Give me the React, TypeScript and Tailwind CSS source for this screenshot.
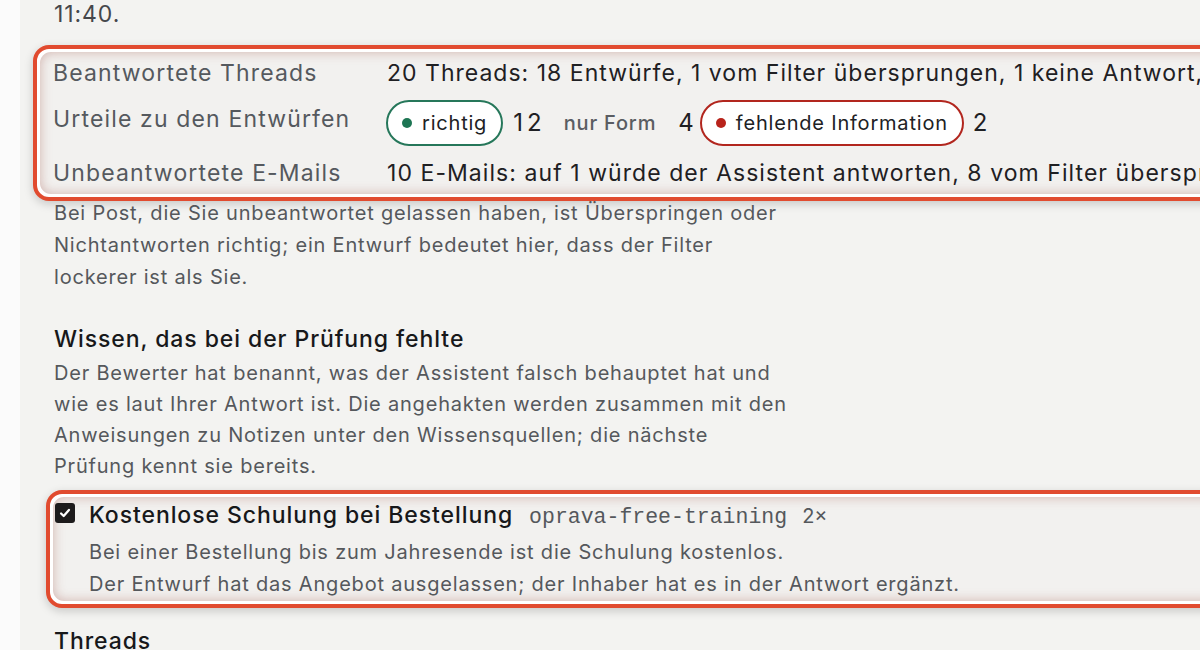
import React from 'react';

const sans = { fontFamily: 'Inter, "Noto Sans", sans-serif' };

function Pill({ label, tone }: { label: string; tone: 'green' | 'red' }) {
  const border = tone === 'green' ? 'border-[#26775a]' : 'border-[#b2261e]';
  const dot = tone === 'green' ? 'bg-[#1d7553]' : 'bg-[#b8231b]';
  return (
    <span className={`inline-flex h-[46px] items-center gap-[10px] rounded-full border-2 ${border} bg-white px-[14px] text-[20px] tracking-[0.04em] text-[#202124]`}>
      <span className={`h-[10px] w-[10px] rounded-full ${dot}`} />
      {label}
    </span>
  );
}

function Highlight({ children, className = '' }: { children: React.ReactNode; className?: string }) {
  return (
    <div className={`w-[1300px] rounded-[16px] border-4 border-[#e14b2f] bg-white p-[3px] shadow-[0_3px_10px_rgba(0,0,0,0.18)] ${className}`}>
      <div className="rounded-[11px] bg-[#f2f1ef] shadow-[inset_0_0_12px_rgba(150,60,50,0.35)]">{children}</div>
    </div>
  );
}

export default function App() {
  return (
    <div className="flex h-[650px] w-[1200px] overflow-hidden bg-[#fbfbfb]" style={sans}>
      <div className="w-[20px] shrink-0" />
      <main className="flex-1 overflow-hidden bg-[#f3f3f1] pl-[34px]">
        <p className="-mt-[2px] text-[23px] leading-[32px] tracking-[0.04em] text-[#45474b]">11:40.</p>

        <Highlight className="-ml-[21px] mt-[15px]">
          <div className="grid grid-cols-[334px_1fr] whitespace-nowrap pl-[13px] text-[23px] tracking-[0.05em]">
            <div className="flex h-[42px] items-center text-[#55595e]">Beantwortete Threads</div>
            <div className="flex h-[42px] items-center tracking-[0.044em] text-[#1f2023]">
              20 Threads: 18 Entwürfe, 1 vom Filter übersprungen, 1 keine Antwort, 0 Fehler
            </div>
            <div className="flex h-[58px] items-start pt-[8px] text-[#55595e]">Urteile zu den Entwürfen</div>
            <div className="-ml-[1px] flex h-[58px] items-center text-[#1f2023]">
              <Pill label="richtig" tone="green" />
              <span className="ml-[10px] text-[24px] tracking-[0.17em]">12</span>
              <span className="ml-[18px] text-[20px] font-medium tracking-[0.04em] text-[#5a5d62]">nur Form</span>
              <span className="ml-[22px] text-[24px]">4</span>
              <span className="ml-[5px]">
                <Pill label="fehlende Information" tone="red" />
              </span>
              <span className="ml-[9px] text-[24px]">2</span>
            </div>
            <div className="flex h-[42px] items-center text-[#55595e]">Unbeantwortete E-Mails</div>
            <div className="flex h-[42px] items-center tracking-[0.046em] text-[#1f2023]">
              10 E-Mails: auf 1 würde der Assistent antworten, 8 vom Filter übersprungen, 1 keine Antwort
            </div>
          </div>
        </Highlight>

        <p className="-mt-[4px] max-w-[738px] text-[20px] leading-[32px] tracking-[0.04em] text-[#55585c]">
          Bei Post, die Sie unbeantwortet gelassen haben, ist Überspringen oder Nichtantworten richtig; ein Entwurf bedeutet hier, dass der Filter lockerer ist als Sie.
        </p>

        <h2 className="mt-[30px] text-[23px] font-medium leading-[32px] tracking-[0.04em] text-[#17181a]">Wissen, das bei der Prüfung fehlte</h2>
        <p className="mt-[3px] max-w-[738px] text-[20px] leading-[31px] tracking-[0.04em] text-[#55585c]">
          Der Bewerter hat benannt, was der Assistent falsch behauptet hat und wie es laut Ihrer Antwort ist. Die angehakten werden zusammen mit den Anweisungen zu Notizen unter den Wissensquellen; die nächste Prüfung kennt sie bereits.
        </p>

        <Highlight className="-ml-[8px] mt-[8px]">
          <div className="flex pb-[1px] pl-[2px] pt-[2px]">
            <span className="mt-[4px] flex h-[20px] w-[20px] shrink-0 items-center justify-center rounded-[3px] bg-[#1d1b1c]">
              <svg viewBox="0 0 16 16" className="h-[14px] w-[14px]" fill="none" stroke="white" strokeWidth="2.6" strokeLinecap="round" strokeLinejoin="round">
                <path d="M3.5 8.5l3 3 6-7" />
              </svg>
            </span>
            <div className="ml-[14px]">
              <div className="flex items-baseline whitespace-nowrap leading-[32px]">
                <span className="text-[23px] font-medium tracking-[0.04em] text-[#17181a]">Kostenlose Schulung bei Bestellung</span>
                <span className="ml-[16px] text-[21.5px] text-[#55585c]" style={{ fontFamily: '"Liberation Mono", monospace' }}>
                  oprava-free-training
                </span>
                <span className="ml-[15px] text-[20px] text-[#55585c]">2×</span>
              </div>
              <div className="mt-[3px] text-[20px] leading-[32px] tracking-[0.04em] text-[#55585c]">
                <p>Bei einer Bestellung bis zum Jahresende ist die Schulung kostenlos.</p>
                <p>Der Entwurf hat das Angebot ausgelassen; der Inhaber hat es in der Antwort ergänzt.</p>
              </div>
            </div>
          </div>
        </Highlight>

        <h2 className="mt-[17px] text-[23px] font-medium leading-[32px] tracking-[0.04em] text-[#17181a]">Threads</h2>
      </main>
    </div>
  );
}
